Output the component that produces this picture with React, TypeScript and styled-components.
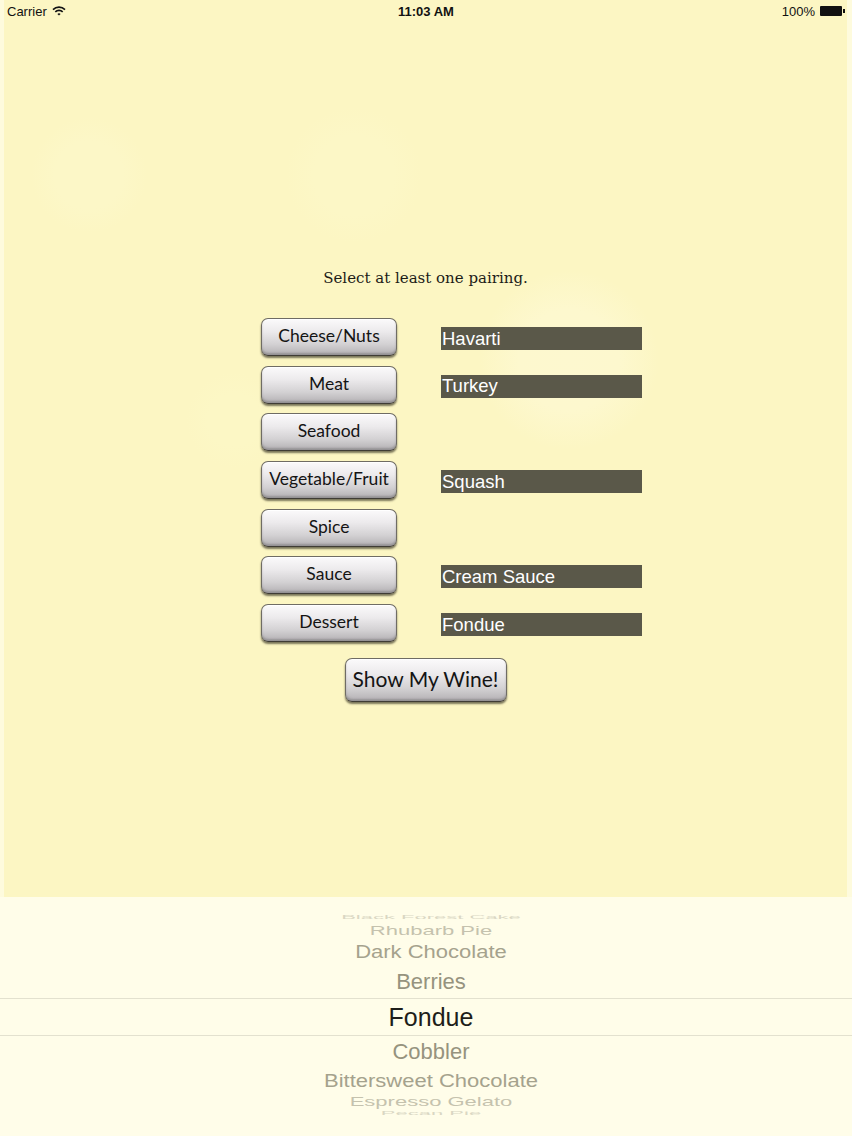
import styled, { createGlobalStyle } from "styled-components";

const GlobalStyle = createGlobalStyle`
  html, body {
    margin: 0;
    padding: 0;
    background: #fefbdd;
  }
  #root {
    width: 852px;
    height: 1136px;
  }
`;

type Pairing = { name: string; choice?: string };

const pairings: Pairing[] = [
  { name: "Cheese/Nuts", choice: "Havarti" },
  { name: "Meat", choice: "Turkey" },
  { name: "Seafood" },
  { name: "Vegetable/Fruit", choice: "Squash" },
  { name: "Spice" },
  { name: "Sauce", choice: "Cream Sauce" },
  { name: "Dessert", choice: "Fondue" },
];

type Wheel = { label: string; h: number; scale: number; fade: number };

const above: Wheel[] = [
  { label: "Black Forest Cake", h: 14, scale: 0.28, fade: 0.35 },
  { label: "Rhubarb Pie", h: 14, scale: 0.6, fade: 0.55 },
  { label: "Dark Chocolate", h: 28, scale: 0.85, fade: 0.85 },
  { label: "Berries", h: 32, scale: 0.97, fade: 1 },
];

const below: Wheel[] = [
  { label: "Cobbler", h: 32, scale: 0.97, fade: 1 },
  { label: "Bittersweet Chocolate", h: 26, scale: 0.85, fade: 0.85 },
  { label: "Espresso Gelato", h: 16, scale: 0.6, fade: 0.55 },
  { label: "Pecan Pie", h: 6, scale: 0.28, fade: 0.35 },
];

const App = () => {
  return (
    <Screen>
      <GlobalStyle />
      <Panel>
        <StatusBar>
          <StatusSide>
            Carrier
            <svg width="14" height="10" viewBox="0 0 14 10">
              <path d="M1 3.6 A8.5 8.5 0 0 1 13 3.6" stroke="#111" strokeWidth="1.6" fill="none" />
              <path d="M3.3 5.9 A5.2 5.2 0 0 1 10.7 5.9" stroke="#111" strokeWidth="1.6" fill="none" />
              <path d="M5.4 8 L7 9.6 L8.6 8 A2.3 2.3 0 0 0 5.4 8 Z" fill="#111" />
            </svg>
          </StatusSide>
          <Clock>11:03 AM</Clock>
          <StatusSide $right>
            100%
            <Battery />
          </StatusSide>
        </StatusBar>

        <Prompt>Select at least one pairing.</Prompt>

        <Pairings>
          {pairings.map((p) => (
            <PairRow key={p.name}>
              <GelButton>{p.name}</GelButton>
              {p.choice && <Choice>{p.choice}</Choice>}
            </PairRow>
          ))}
        </Pairings>

        <GelButton $big>Show My Wine!</GelButton>
      </Panel>

      <Picker>
        {above.map((w) => (
          <WheelRow key={w.label} $h={w.h}>
            <WheelText $scale={w.scale} $fade={w.fade}>{w.label}</WheelText>
          </WheelRow>
        ))}
        <Selected>Fondue</Selected>
        {below.map((w) => (
          <WheelRow key={w.label} $h={w.h}>
            <WheelText $scale={w.scale} $fade={w.fade}>{w.label}</WheelText>
          </WheelRow>
        ))}
      </Picker>
    </Screen>
  );
};
export default App;

const Screen = styled.div`
width: 852px;
height: 1136px;
display: flex;
flex-direction: column;
background: #fefbdd;
overflow: hidden;
`;

// faint bokeh spots behind the form
const Panel = styled.div`
margin: 0 5px 0 4px;
height: 897px;
display: flex;
flex-direction: column;
align-items: center;
background-color: #fcf6c3;
background-image:
  radial-gradient(circle at 565px 360px, #fdf8cf 0, #fdf8ce 50px, rgba(252,246,195,0) 90px),
  radial-gradient(circle at 350px 175px, #fcf7c6 0, #fcf7c6 40px, rgba(252,246,195,0) 68px),
  radial-gradient(circle at 85px 175px, #fcf7c7 0, #fcf7c7 34px, rgba(252,246,195,0) 58px),
  radial-gradient(circle at 230px 420px, #fcf7c5 0, #fcf7c5 26px, rgba(252,246,195,0) 48px);
`;

const StatusBar = styled.div`
align-self: stretch;
height: 22px;
display: flex;
align-items: center;
justify-content: space-between;
padding: 0 2px 0 3px;
font-family: "Liberation Sans", Arial, sans-serif;
font-size: 13px;
color: #111;
`;

const StatusSide = styled.div<{ $right?: boolean }>`
width: 120px;
display: flex;
align-items: center;
justify-content: ${(p) => (p.$right ? "flex-end" : "flex-start")};
gap: 5px;
`;

const Clock = styled.div`
font-weight: bold;
`;

const Battery = styled.div`
position: relative;
width: 22px;
height: 10px;
margin-right: 3px;
background: #111;
border-radius: 1px;

&::after {
  content: "";
  position: absolute;
  right: -3px;
  top: 3px;
  width: 2px;
  height: 4px;
  background: #111;
}
`;

const Prompt = styled.div`
margin-top: 247px;
font-family: "DejaVu Serif", "Liberation Serif", serif;
font-size: 15px;
line-height: 18px;
color: #1c1c18;
`;

const Pairings = styled.div`
align-self: stretch;
margin-top: 31px;
padding-left: 257px;
display: flex;
flex-direction: column;
gap: 9.7px;
`;

const PairRow = styled.div`
height: 38px;
display: flex;
align-items: center;
gap: 44px;
`;

const GelButton = styled.button<{ $big?: boolean }>`
box-sizing: border-box;
width: ${(p) => (p.$big ? "162px" : "136px")};
height: ${(p) => (p.$big ? "44px" : "38px")};
margin-top: ${(p) => (p.$big ? "16px" : "0")};
padding: 0 0 ${(p) => (p.$big ? "4px" : "3px")};
border: 1px solid #6f6c64;
border-bottom-color: #3f3c35;
border-radius: 7px;
background: linear-gradient(#fbfafb 0%, #eceaec 35%, #d3d1d3 70%, #b3b0b3 100%);
box-shadow: 0 2px 2px rgba(35, 32, 18, 0.6), inset 0 1px 0 #ffffff, inset 0 -2px 2px rgba(90, 86, 90, 0.35);
font-family: Lato, "Open Sans", sans-serif;
font-size: ${(p) => (p.$big ? "21px" : "17.5px")};
color: #141414;
white-space: nowrap;
cursor: pointer;
`;

const Choice = styled.div`
width: 201px;
height: 23px;
margin-top: 3px;
display: flex;
align-items: center;
padding-left: 1px;
box-sizing: border-box;
background: #5a5849;
font-family: "Liberation Sans", Arial, sans-serif;
font-size: 18.5px;
color: #ffffff;
white-space: nowrap;
`;

const Picker = styled.div`
flex: 1;
padding: 13px 0 0 10px;
display: flex;
flex-direction: column;
background: #fffde9;
font-family: "Liberation Sans", Arial, sans-serif;
`;

const WheelRow = styled.div<{ $h: number }>`
height: ${(p) => p.$h}px;
display: flex;
align-items: center;
justify-content: center;
overflow: visible;
`;

const WheelText = styled.span<{ $scale: number; $fade: number }>`
font-size: 22px;
line-height: 1;
color: #96937e;
opacity: ${(p) => p.$fade};
transform: scaleY(${(p) => p.$scale});
white-space: nowrap;
`;

const Selected = styled.div`
height: 38px;
margin-left: -10px;
padding-left: 10px;
display: flex;
align-items: center;
justify-content: center;
border-top: 1px solid #e3e1cf;
border-bottom: 1px solid #e3e1cf;
box-sizing: border-box;
font-size: 25px;
color: #1e1e1a;
`;
